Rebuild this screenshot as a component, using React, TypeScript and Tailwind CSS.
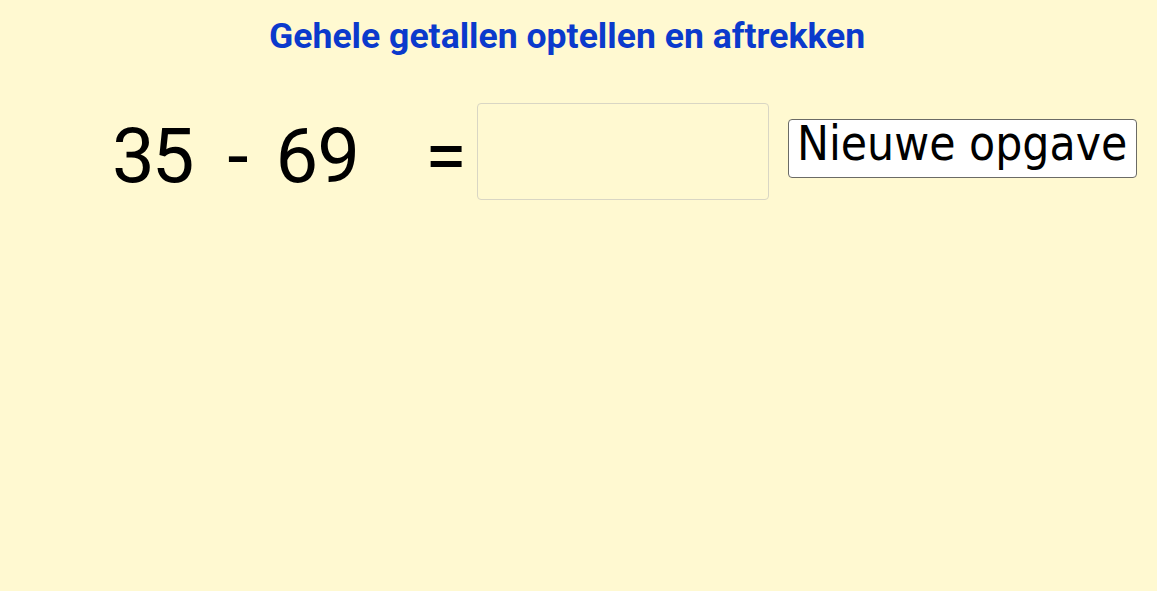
export default function App() {
  return (
    <div className="w-[1157px] h-[591px] bg-[#fff9d1] overflow-hidden font-['Roboto',sans-serif]">
      <h1 className="pt-[15px] pl-[269px] text-[35.6px] leading-[42px] font-bold text-[#0b3acc]">
        Gehele getallen optellen en aftrekken
      </h1>

      <div className="mt-[46px] flex flex-row items-start text-black">
        <span className="ml-[112px] mt-[15px] text-[76px] leading-none tracking-[-3px]">35</span>
        <span className="ml-[36px] mt-[15px] text-[76px] leading-none">-</span>
        <span className="ml-[27px] mt-[15px] text-[76px] leading-none tracking-[-1px]">69</span>
        <span className="ml-[66px] mt-[15px] text-[76px] leading-none">=</span>
        <input
          type="text"
          className="ml-[10px] w-[292px] h-[97px] rounded-[4px] border border-[#d9d6c4] bg-[#fff9d1] outline-none px-2 text-[40px]"
        />
        <button
          type="button"
          className="ml-[19px] mt-[16px] w-[349px] h-[59px] pb-[10px] flex items-center justify-center rounded-[4px] border border-[#6b6b66] bg-white text-black text-[47.5px] leading-none font-['DejaVu_Sans_Condensed','DejaVu_Sans',sans-serif]"
        >
          Nieuwe opgave
        </button>
      </div>
    </div>
  );
}
